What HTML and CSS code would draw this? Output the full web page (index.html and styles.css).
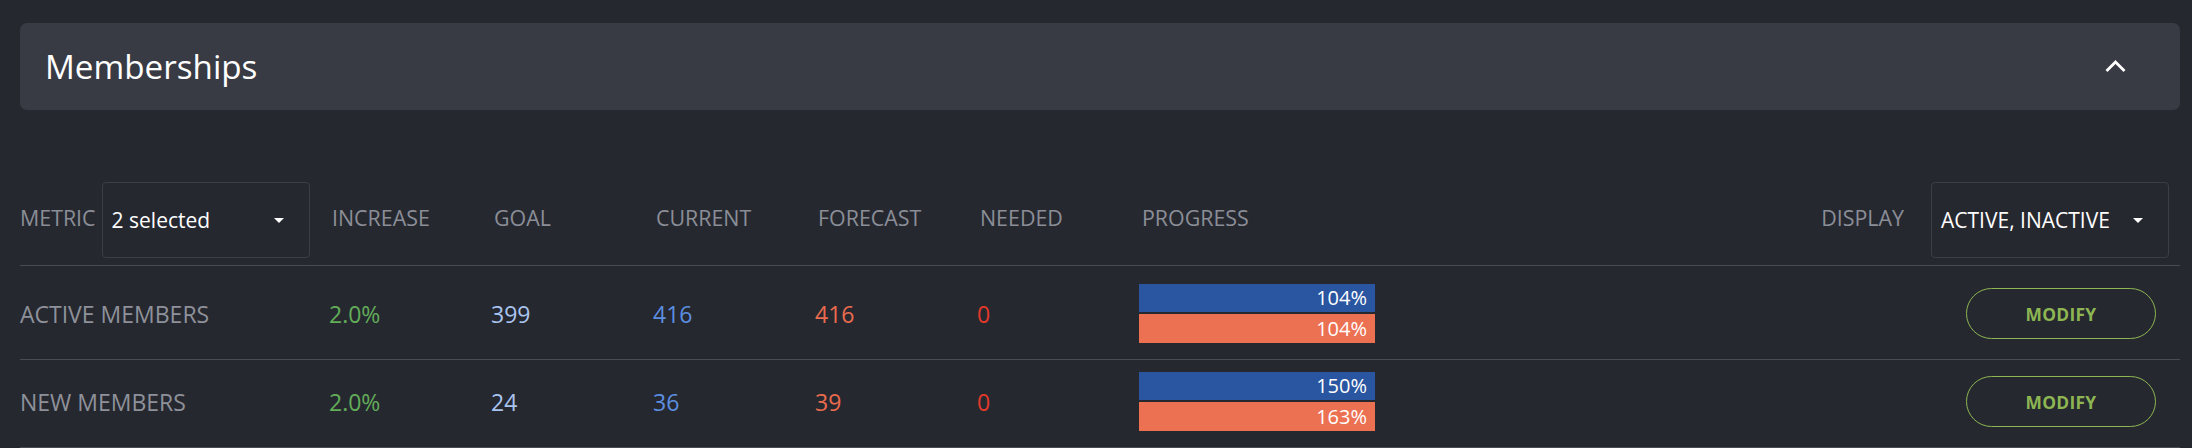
FILE: index.html
```html
<!DOCTYPE html>
<html lang="en">
<head>
<meta charset="utf-8">
<title>Memberships</title>
<link rel="stylesheet" href="styles.css">
</head>
<body>
<div class="page">
  <section class="panel">
    <h2 class="panel-title">Memberships</h2>
    <button class="collapse" aria-label="Collapse">
      <svg width="21" height="13" viewBox="0 0 21 13"><polyline points="1.5,11 10.5,2 19.5,11" fill="none" stroke="#ffffff" stroke-width="2.8"/></svg>
    </button>
  </section>

  <div class="table">
    <div class="row row-head">
      <div class="metric-cell">
        <span class="th-label">METRIC</span>
        <div class="select select-metric"><span>2 selected</span><span class="caret"></span></div>
      </div>
      <div class="th"><span class="th-label">INCREASE</span></div>
      <div class="th"><span class="th-label">GOAL</span></div>
      <div class="th"><span class="th-label">CURRENT</span></div>
      <div class="th"><span class="th-label">FORECAST</span></div>
      <div class="th"><span class="th-label">NEEDED</span></div>
      <div class="th"><span class="th-label">PROGRESS</span></div>
      <div class="th-end">
        <span class="th-label">DISPLAY</span>
        <div class="select select-display"><span>ACTIVE, INACTIVE</span><span class="caret"></span></div>
      </div>
    </div>

    <div class="row row-data first">
      <div class="td name">ACTIVE MEMBERS</div>
      <div class="td inc">2.0%</div>
      <div class="td goal">399</div>
      <div class="td cur">416</div>
      <div class="td fc">416</div>
      <div class="td need">0</div>
      <div class="bars">
        <div class="bar bar-blue">104%</div>
        <div class="bar bar-orange">104%</div>
      </div>
      <div class="actions"><button class="modify">MODIFY</button></div>
    </div>

    <div class="row row-data">
      <div class="td name">NEW MEMBERS</div>
      <div class="td inc">2.0%</div>
      <div class="td goal">24</div>
      <div class="td cur">36</div>
      <div class="td fc">39</div>
      <div class="td need">0</div>
      <div class="bars">
        <div class="bar bar-blue">150%</div>
        <div class="bar bar-orange">163%</div>
      </div>
      <div class="actions"><button class="modify">MODIFY</button></div>
    </div>
  </div>
</div>
</body>
</html>
```

FILE: styles.css
```css
* { box-sizing: border-box; }

body {
  margin: 0;
  background: #262830;
  font-family: "Open Sans", "Noto Sans", sans-serif;
}

.page {
  padding: 23px 12px 0 20px;
}

.panel {
  height: 87px;
  background: #383a44;
  border-radius: 7px;
  display: flex;
  align-items: center;
  justify-content: space-between;
  padding: 0 54px 0 25px;
}

.panel-title {
  margin: 0;
  font-size: 33.2px;
  font-weight: 400;
  color: #ffffff;
}

.collapse {
  background: none;
  border: 0;
  padding: 0;
  display: flex;
  align-items: center;
}

.table {
  margin-top: 72px;
}

.row {
  display: grid;
  grid-template-columns: 309px repeat(5, 162px) 236px 1fr;
  align-items: center;
  border-bottom: 1px solid #4a4c54;
}

.row-head {
  padding-bottom: 7px;
}

.row-data {
  padding: 12px 0 16px;
}

.row-data.first {
  padding-top: 18px;
}

.th-label {
  font-size: 21.4px;
  color: #8b8e97;
  padding-bottom: 6px;
}

.th {
  padding-left: 3px;
  display: flex;
}

.metric-cell {
  display: flex;
  align-items: center;
  gap: 6px;
}

.select {
  height: 76px;
  border: 1px solid #3b3e47;
  border-radius: 4px;
  display: flex;
  align-items: center;
  justify-content: space-between;
  padding: 0 25px 0 9px;
  color: #ffffff;
  font-size: 21px;
}

.select-metric { width: 208px; }
.select-display { width: 238px; }

.caret {
  width: 0;
  height: 0;
  border-left: 5.5px solid transparent;
  border-right: 5.5px solid transparent;
  border-top: 5px solid #ffffff;
}

.th-end {
  display: flex;
  justify-content: flex-end;
  align-items: center;
  gap: 27px;
  padding-right: 11px;
}

.td {
  font-size: 23px;
  font-weight: 400;
}

.name { color: #8e919a; }
.inc { color: #62ad58; }
.goal { color: #a9c4ef; }
.cur { color: #5b8fe0; }
.fc { color: #ea6b4d; }
.need { color: #e2392b; }

.bars {
  display: flex;
  flex-direction: column;
  gap: 2px;
}

.bar {
  height: 28px;
  line-height: 28px;
  text-align: right;
  padding-right: 8px;
  color: #ffffff;
  font-size: 20px;
}

.bar-blue { background: #2a55a0; }
.bar-orange { background: #ec7152; height: 29px; line-height: 29px; }

.actions {
  display: flex;
  justify-content: flex-end;
  padding-right: 24px;
}

.modify {
  width: 190px;
  height: 51px;
  border: 1px solid #8db652;
  border-radius: 26px;
  background: transparent;
  color: #8db652;
  font-family: "Open Sans", "Noto Sans", sans-serif;
  font-weight: 700;
  font-size: 17.4px;
  letter-spacing: 0.3px;
}
```
